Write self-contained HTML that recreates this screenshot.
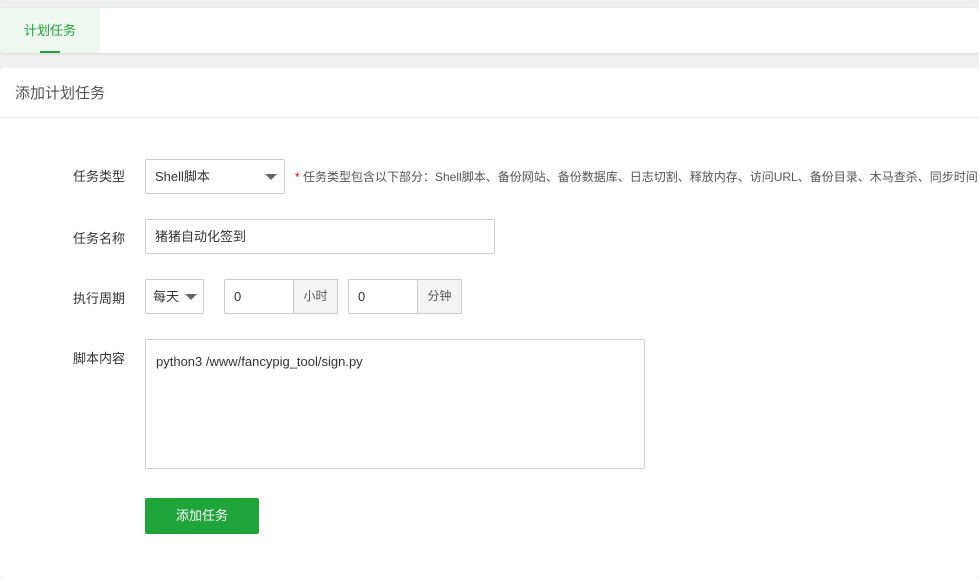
<!DOCTYPE html>
<html><head><meta charset="utf-8"><style>
*{box-sizing:border-box;margin:0;padding:0}
body{width:979px;height:571px;background:#f0f0f0;font-family:"Liberation Sans","Noto Sans CJK SC",sans-serif;font-size:12px;color:#333;overflow:hidden;position:relative}
.top{position:absolute;left:0;top:8px;width:979px;height:45px;background:#fff;border-radius:4px;box-shadow:0 1px 3px rgba(0,0,0,.1)}
.tab{position:absolute;left:0;top:0;width:100px;height:45px;background:#eff8f0;color:#20a53a;font-size:13px;text-align:center;line-height:45px;border-radius:4px 0 0 4px}
.tab i{position:absolute;left:40px;bottom:0;width:20px;height:2px;background:#20a53a}
.main{position:absolute;left:0;top:68px;width:979px;height:510px;background:#fff;border-radius:4px}
.hd{height:50px;border-bottom:1px solid #eee;font-size:15px;color:#555;line-height:52px;padding-left:15px}
.lbl{position:absolute;left:73px;font-size:13px;color:#333}
.box{position:absolute;border:1px solid #ccc;border-radius:2px;background:#fff;font-size:13px;color:#333;padding-left:9px}
.tri{position:absolute;width:0;height:0;border-left:6px solid transparent;border-right:6px solid transparent;border-top:6px solid #666}
.unit{position:absolute;background:#f4f4f4;border:1px solid #ccc;color:#555;text-align:center;font-size:12px}
</style></head><body>
<div class="top"><div class="tab">计划任务<i></i></div></div>
<div class="main">
<div class="hd">添加计划任务</div>
<div class="lbl" style="top:98px">任务类型</div>
<div class="box" style="left:145px;top:91px;width:140px;height:35px;line-height:33px">Shell脚本<div class="tri" style="right:7px;top:14px"></div></div>
<div style="position:absolute;left:295px;top:100px;font-size:12px;color:#555;white-space:nowrap"><span style="color:#e00">*</span> 任务类型包含以下部分：Shell脚本、备份网站、备份数据库、日志切割、释放内存、访问URL、备份目录、木马查杀、同步时间</div>
<div class="lbl" style="top:160px">任务名称</div>
<div class="box" style="left:145px;top:151px;width:350px;height:35px;line-height:33px">猪猪自动化签到</div>
<div class="lbl" style="top:220px">执行周期</div>
<div class="box" style="left:145px;top:211px;width:59px;height:35px;line-height:33px;padding-left:7px">每天<div class="tri" style="right:6px;top:14px"></div></div>
<div class="box" style="left:224px;top:211px;width:70px;height:35px;line-height:33px">0</div>
<div class="unit" style="left:293px;top:211px;width:45px;height:35px;line-height:33px">小时</div>
<div class="box" style="left:348px;top:211px;width:70px;height:35px;line-height:33px">0</div>
<div class="unit" style="left:417px;top:211px;width:45px;height:35px;line-height:33px">分钟</div>
<div class="lbl" style="top:280px">脚本内容</div>
<div class="box" style="left:145px;top:271px;width:500px;height:130px;padding:14px 10px">python3 /www/fancypig_tool/sign.py</div>
<div style="position:absolute;left:145px;top:430px;width:114px;height:36px;background:#20a53a;border-radius:2px;color:#fff;font-size:13px;text-align:center;line-height:36px">添加任务</div>
</div>
</body></html>
